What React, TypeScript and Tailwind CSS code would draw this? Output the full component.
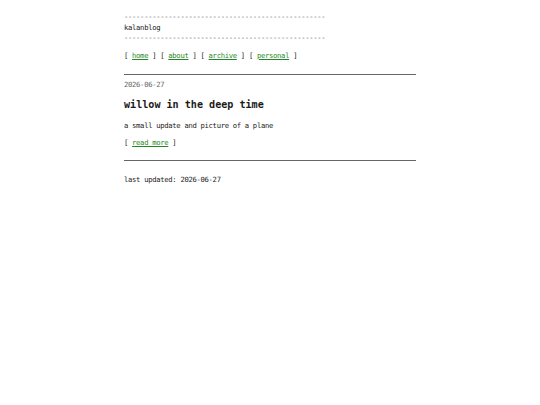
import React from "react";

const dashes = "-".repeat(50);

export default function App() {
  return (
    <div className="min-h-[405px] bg-white text-[#1a1a1a] antialiased font-['DejaVu_Sans_Mono',monospace] text-[7.2px] tracking-[-0.3px] leading-[10.5px]">
      <div className="mx-auto w-[292px] pt-[12px]">
        <div className="text-[#555]">{dashes}</div>
        <div>kalanblog</div>
        <div className="text-[#555]">{dashes}</div>
        <nav className="mt-[7px]">
          [ <a href="#" className="text-[#1f8a1f] underline">home</a> ] [{" "}
          <a href="#" className="text-[#1f8a1f] underline">about</a> ] [{" "}
          <a href="#" className="text-[#1f8a1f] underline">archive</a> ] [{" "}
          <a href="#" className="text-[#1f8a1f] underline">personal</a> ]
        </nav>
        <hr className="mt-[13px] border-0 border-t border-[#666]" />
        <div className="mt-[5px] text-[#666]">2026-06-27</div>
        <h1 className="mt-[7px] text-[10.1px] tracking-normal leading-[14px] font-bold">willow in the deep time</h1>
        <p className="mt-[9px]">a small update and picture of a plane</p>
        <p className="mt-[7px]">
          [ <a href="#" className="text-[#1f8a1f] underline">read more</a> ]
        </p>
        <hr className="mt-[11px] border-0 border-t border-[#666]" />
        <p className="mt-[14px]">last updated: 2026-06-27</p>
      </div>
    </div>
  );
}
